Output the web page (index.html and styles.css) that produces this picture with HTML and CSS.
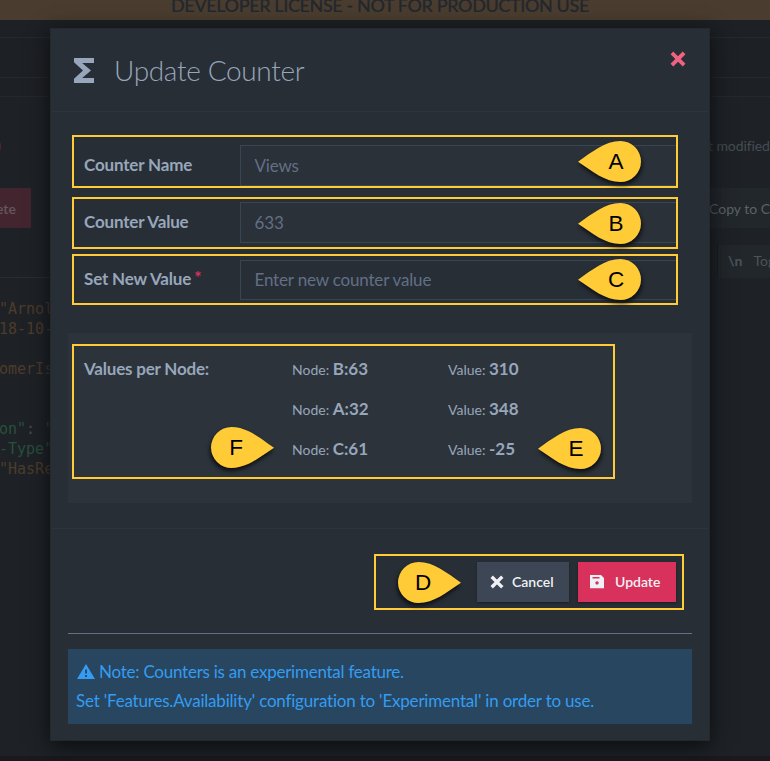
FILE: index.html
```
<!DOCTYPE html>
<html lang="en">
<head>
<meta charset="utf-8">
<title>Update Counter</title>
<link rel="stylesheet" href="styles.css">
</head>
<body>
<svg class="defs" width="0" height="0" aria-hidden="true">
  <symbol id="cross" viewBox="0 0 14 14"><path d="M2.9 2.9 11.1 11.1M11.1 2.9 2.9 11.1" fill="none" stroke="currentColor" stroke-width="3.4" stroke-linecap="square"/></symbol>
  <symbol id="drop" viewBox="0 0 63 41"><path d="M0 20.7C14 11 27 0 42.5 0a20.5 20.5 0 0 1 0 41C27 41 14 30 0 20.7Z" fill="#ffcb36"/></symbol>
</svg>

<div class="page">
  <div class="license">DEVELOPER LICENSE - NOT FOR PRODUCTION USE</div>
  <div class="bar bar-top"></div>
  <div class="bar bar-mid"></div>
  <div class="bar bar-low"></div>
  <div class="work">
    <div class="left">
      <div class="left-mark">)</div>
      <div class="delete">ete</div>
      <pre class="code"><span class="str">"Arnol</span>
<span class="str">18-10-</span>

<span class="str">omerIs</span>


<span class="key">on"</span>: <span class="str">"</span>
<span class="key">-Type"</span>
<span class="str">"HasRe</span></pre>
    </div>
    <div class="right">
      <div class="modified">t modified</div>
      <div class="copy">Copy to C</div>
      <div class="toggle"><b>\n</b><span>Tog</span></div>
    </div>
  </div>
</div>

<div class="modal">
  <header class="head">
    <svg class="sigma" viewBox="0 0 20 25"><path d="M0 0H20V5H8.2L17 12.5 8.2 20H20V25H0V20.8L9 12.5 0 4.2Z" fill="currentColor"/></svg>
    <h1>Update Counter</h1>
    <svg class="close"><use href="#cross"/></svg>
  </header>
  <main class="form">
    <div class="row"><label>Counter Name</label><div class="input locked">Views</div></div>
    <div class="row"><label>Counter Value</label><div class="input locked">633</div></div>
    <div class="row editable"><label>Set New Value <i>*</i></label><div class="input">Enter new counter value</div></div>
    <section class="nodes">
      <h2>Values per Node:</h2>
      <div class="node-list">
        <div>Node: <b>B:63</b></div><div>Value: <b>310</b></div>
        <div>Node: <b>A:32</b></div><div>Value: <b>348</b></div>
        <div>Node: <b>C:61</b></div><div>Value: <b>-25</b></div>
      </div>
    </section>
  </main>
  <footer class="foot">
    <div class="actions">
      <div class="btn cancel"><svg width="14" height="14"><use href="#cross"/></svg><span>Cancel</span></div>
      <div class="btn update"><svg width="14" height="14" viewBox="0 0 14 14"><path fill-rule="evenodd" fill="currentColor" d="M0 0H11L14 3V13.3H0ZM2.5 2V3.5H9.5V2ZM7 6.2a1.7 1.7 0 1 0 .01 0Z"/></svg><span>Update</span></div>
    </div>
    <div class="note">
      <div class="lead"><svg width="18" height="15" viewBox="0 0 18 15"><path d="M9 0 18 15H0Z" fill="currentColor"/><path d="M9 5.5V9.5M9 11V13" stroke="#28465f" stroke-width="1.8"/></svg> Note: Counters is an experimental feature.</div>
      <div>Set 'Features.Availability' configuration to 'Experimental' in order to use.</div>
    </div>
  </footer>
</div>

<div class="frame frame-a"></div>
<div class="frame frame-b"></div>
<div class="frame frame-c"></div>
<div class="frame frame-nodes"></div>
<div class="frame frame-actions"></div>
<div class="pin pin-a"><svg><use href="#drop"/></svg><span>A</span></div>
<div class="pin pin-b"><svg><use href="#drop"/></svg><span>B</span></div>
<div class="pin pin-c"><svg><use href="#drop"/></svg><span>C</span></div>
<div class="pin pin-e"><svg><use href="#drop"/></svg><span>E</span></div>
<div class="pin pin-f east"><svg><use href="#drop"/></svg><span>F</span></div>
<div class="pin pin-d east"><svg><use href="#drop"/></svg><span>D</span></div>
</body>
</html>
```
FILE: styles.css
```
* { box-sizing: border-box; }
body { margin: 0; width: 770px; height: 761px; overflow: hidden; position: relative; background: #1e2226; font-family: Lato, sans-serif; color: #97a6ba; }
svg { display: block; }
.defs { position: absolute; }

/* dimmed page */
.page { height: 761px; display: flex; flex-direction: column; overflow: hidden; border-bottom: 5px solid #1b191e; }
.license { flex: none; height: 20px; padding-right: 10px; background: #4a3d2f; color: #23282e; font-size: 18px; font-weight: 500; letter-spacing: -.38px; line-height: 10px; text-align: center; -webkit-text-stroke: .2px #23282e; }
.bar { flex: none; border-bottom: 1px solid #25292e; background: #1d2024; }
.bar-top { height: 18px; }
.bar-mid { height: 40px; }
.bar-low { height: 19px; }
.work { display: flex; justify-content: space-between; flex: 1; }
.left { width: 51px; overflow: hidden; }
.left-mark { height: 91px; padding-top: 39px; margin-left: -3px; font-size: 15px; line-height: 18px; color: #682c3a; }
.delete { width: 31px; height: 40px; background: #42252f; color: #65565e; font-size: 14px; font-weight: 600; line-height: 41px; text-indent: -4px; }
.code { margin: 49px 0 0 -1px; padding-top: 21px; border-top: 1px solid #292e32; font: 15px/20px "DejaVu Sans Mono", monospace; color: #454b51; }
.code .str { color: #4d3b2b; }
.code .key { color: #27503b; }
.right { width: 61px; overflow: hidden; font-size: 14px; white-space: nowrap; }
.modified { height: 91px; padding-top: 39px; line-height: 19px; letter-spacing: -.1px; text-indent: -1px; color: #454c53; }
.copy { height: 40px; background: #22272b; line-height: 41px; color: #5b6269; }
.toggle { display: flex; gap: 11px; height: 33px; margin: 17px 0 0 8px; padding-left: 10px; border-left: 1px solid #191d20; background: #22272b; line-height: 32px; color: #4c5359; }

/* modal */
.modal { position: absolute; left: 50px; top: 28px; width: 660px; height: 713px; background: #282e36; border: 1px solid #24282f; box-shadow: 0 5px 20px #0b0c0f; }
.head { display: flex; height: 83px; padding: 0 23px; border-bottom: 1px solid #2d343c; }
.sigma { width: 20px; height: 25px; margin-top: 29px; }
.head h1 { flex: 1; margin: 23px 0 0 20px; font-size: 28px; font-weight: 300; letter-spacing: -.33px; line-height: 36px; }
.close { width: 16px; height: 16px; margin-top: 22px; color: #f06380; }
.form { height: 417px; padding: 33px 17px 0; border-bottom: 1px solid #2d343c; }
.row { display: flex; height: 41px; margin-bottom: 16px; padding: 0 15px 0 16px; letter-spacing: -.17px; }
.row label { width: 156px; font-size: 17px; font-weight: 700; line-height: 39px; }
.row i { color: #d8325c; font-style: normal; font-weight: 700; position: relative; top: -1px; left: -1px; }
.input { flex: 1; border: 1px solid #3a4552; padding-left: 13.5px; font-size: 17px; line-height: 40px; color: #626f86; }
.locked { background: #2a3138; }
.editable { height: 40px; margin-top: 17px; }
.editable label { line-height: 37px; }
.editable .input { line-height: 38px; }
.nodes { display: flex; height: 170px; margin-top: 33px; padding: 16px; background: #2c333b; }
.nodes h2 { width: 208px; margin: 0; font-size: 17px; letter-spacing: -.2px; line-height: 40px; }
.node-list { display: grid; grid-template-columns: 156px 156px; grid-auto-rows: 40px; line-height: 40px; font-size: 14px; }
.node-list b { font-size: 17px; }
.foot { padding: 33px 17px 16px; }
.actions { display: flex; justify-content: flex-end; gap: 9px; height: 72px; padding-right: 16px; border-bottom: 1px solid #677082; }
.btn { display: flex; align-items: center; height: 40px; color: #f0f1f5; font-size: 14px; font-weight: 600; line-height: 16px; box-shadow: 0 1px 2px #1b1e24; }
.btn span { margin-top: -1px; }
.cancel { width: 92px; padding-left: 13px; gap: 8px; background: #3c4654; }
.update { width: 98px; padding-left: 12px; gap: 11px; background: #d8325c; }
.note { height: 75px; margin-top: 15px; padding: 8px; background: #28465f; color: #349cf2; font-size: 17px; letter-spacing: -.2px; line-height: 29px; white-space: nowrap; }
.lead { letter-spacing: -.25px; }
.note svg { display: inline-block; vertical-align: -1px; margin-left: 1px; }

/* callouts */
.frame { position: absolute; border: 2px solid #ffcb36; left: 72px; width: 606px; }
.frame-a { top: 135px; height: 53px; }
.frame-b { top: 197px; height: 52px; }
.frame-c { top: 254px; height: 51px; }
.frame-nodes { top: 344px; width: 543px; height: 135px; }
.frame-actions { left: 374px; top: 554px; width: 310px; height: 56px; }
.pin { position: absolute; left: 578px; width: 63px; height: 41px; color: #000; font: 22.5px/41px "Liberation Sans", Arial, sans-serif; }
.pin svg { position: absolute; width: 63px; height: 41px; overflow: visible; filter: drop-shadow(1px 3px 2px #0c0f12); }
.pin span { position: absolute; left: 18px; width: 40px; top: 0; text-align: center; }
.east svg { transform: scaleX(-1); }
.east span { left: 5px; }
.pin-a { top: 141px; }
.pin-b { top: 203px; }
.pin-c { top: 259px; }
.pin-e { left: 538px; top: 428px; }
.pin-f { left: 211px; top: 427px; }
.pin-d { left: 398px; top: 562px; }
```
